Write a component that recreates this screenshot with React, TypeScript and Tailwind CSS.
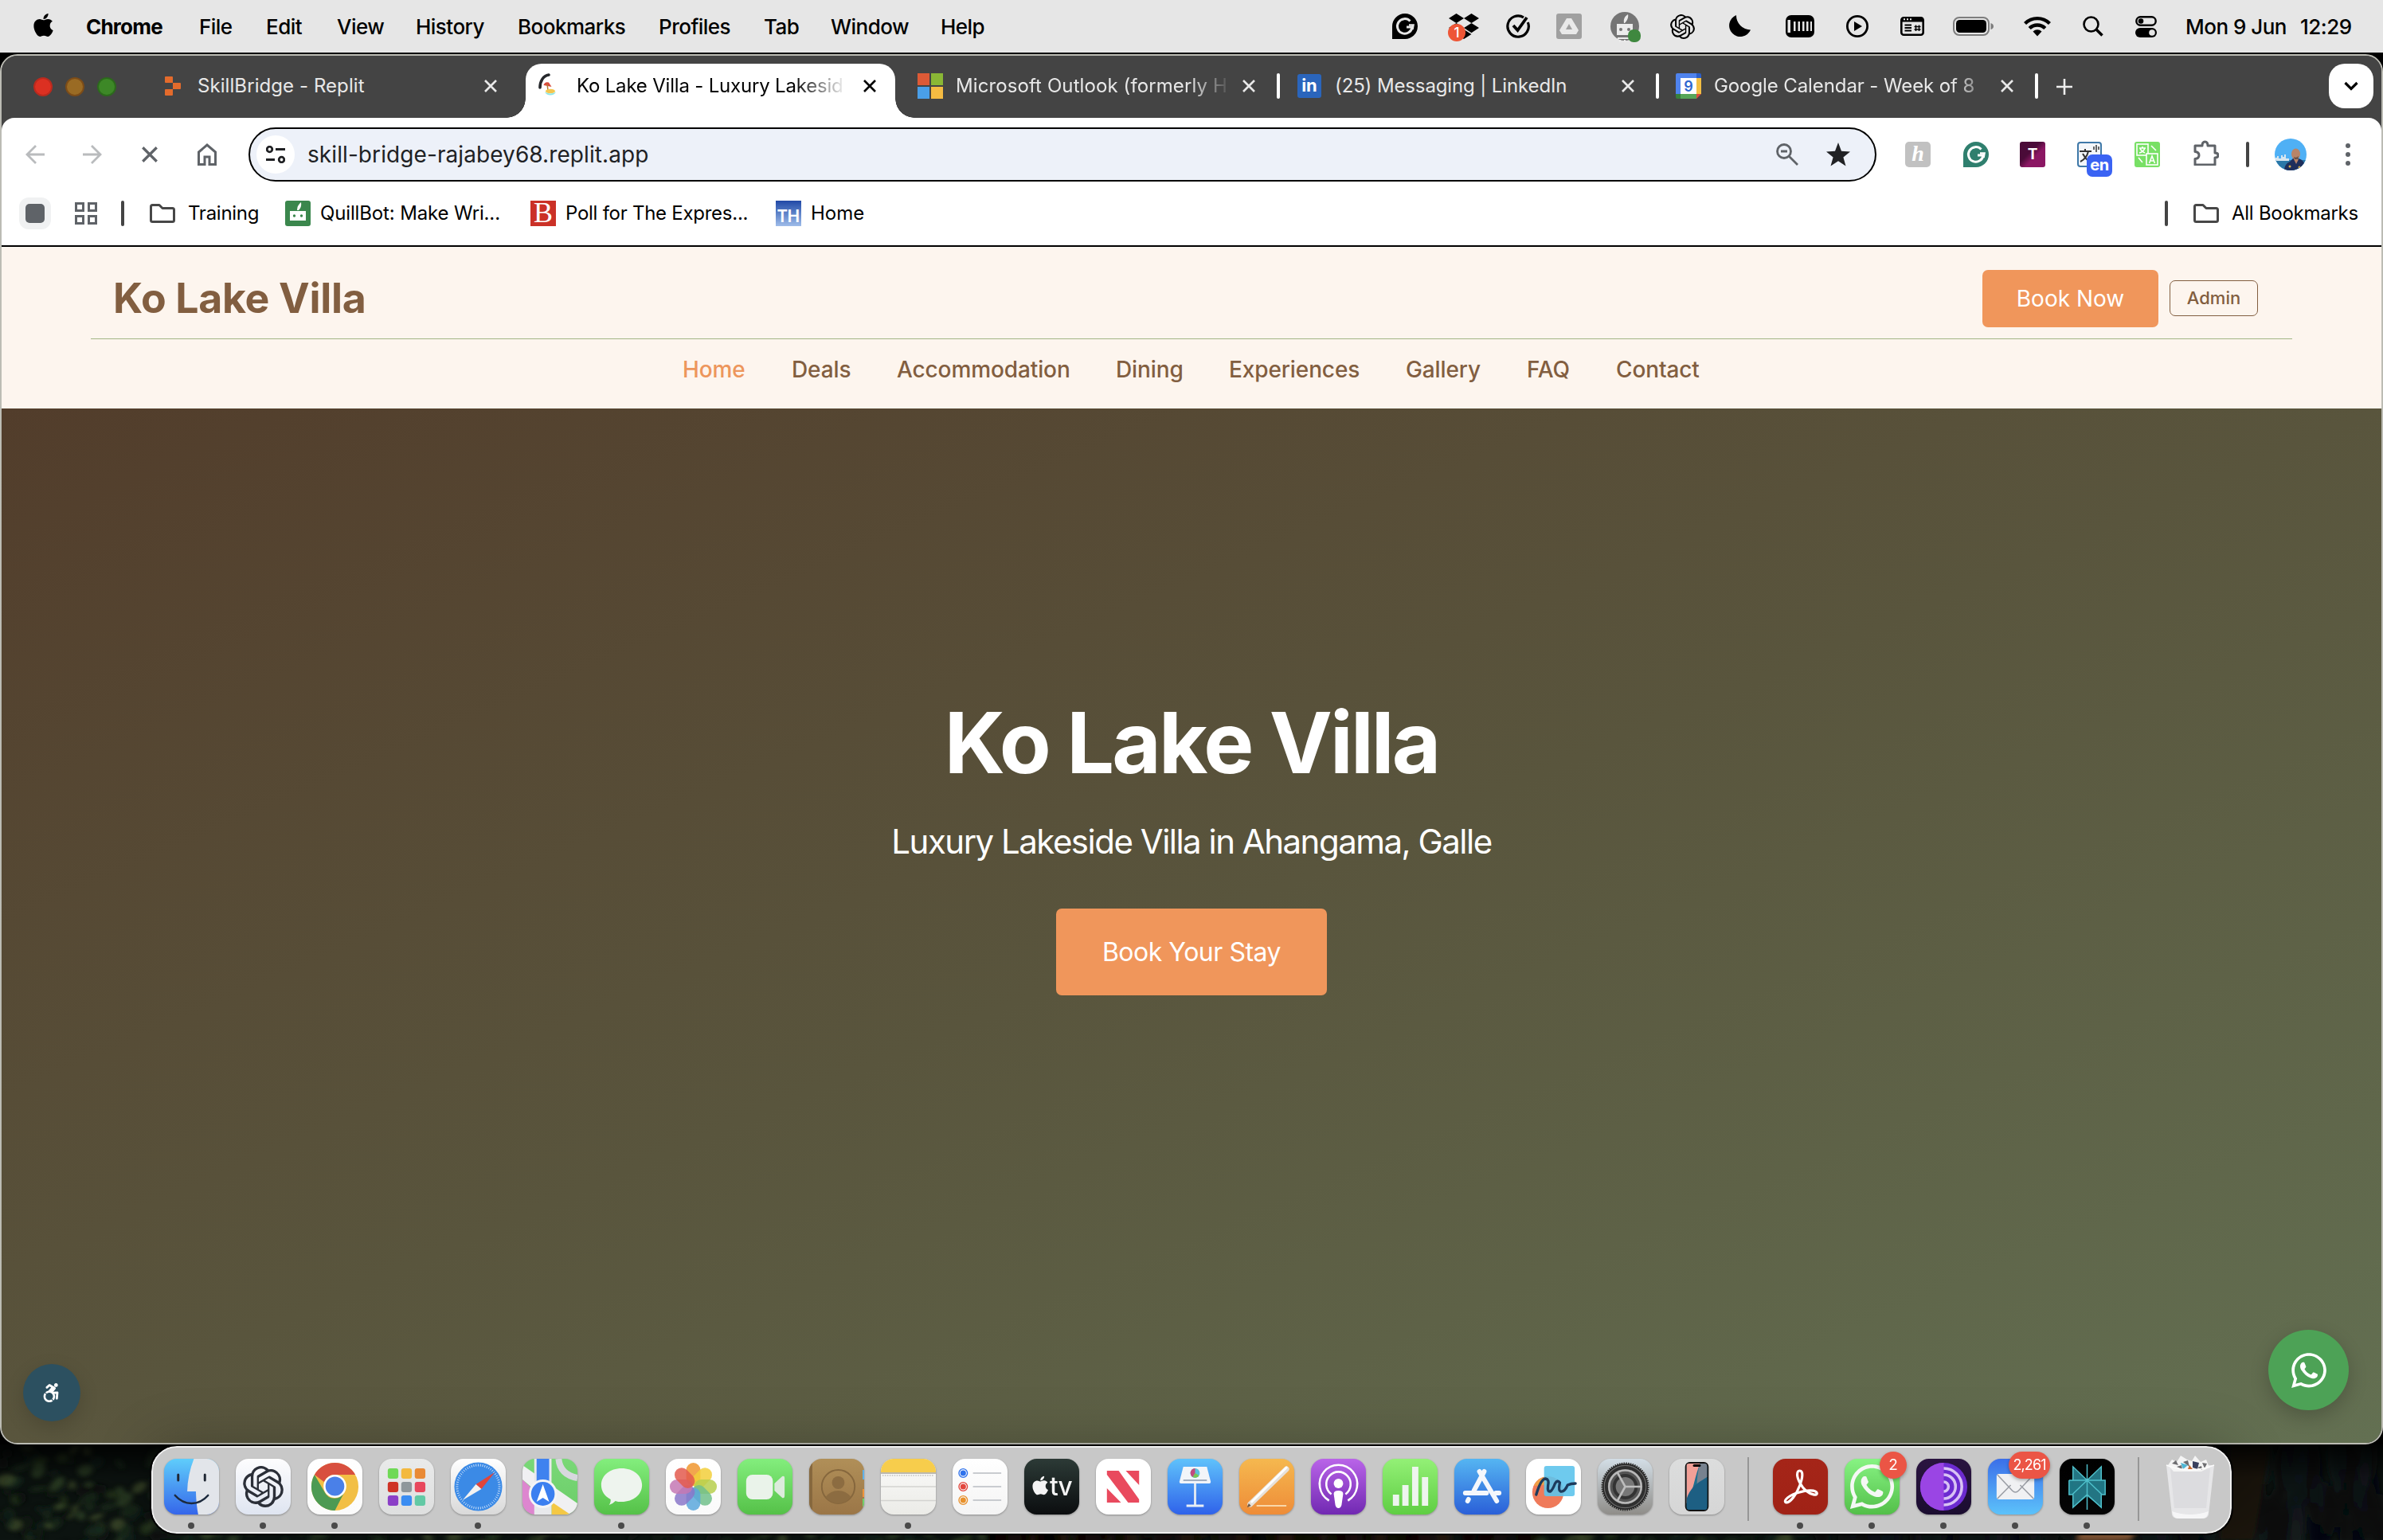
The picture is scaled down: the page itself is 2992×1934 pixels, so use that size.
import React from "react";
import { FaApple, FaDropbox, FaWhatsapp, FaAccessibleIcon } from "react-icons/fa";
import { SiOpenai } from "react-icons/si";

/* ---------- shared glyphs ---------- */

function GrammarlyG({ body, ink }: { body: string; ink: string }) {
  return (
    <svg className="size-8" viewBox="0 0 32 32" fill="none">
      <path d="M0 32V16a16 16 0 1 1 16 16Z" fill={body} />
      <path d="M22.500 9.500A9.300 9.300 0 1 0 25 17h-7" stroke={ink} strokeWidth="3" />
      <path d="M21 14.500h5.500l-1 5.500" stroke={ink} strokeWidth="2.500" />
    </svg>
  );
}

function CloseX({ className }: { className: string }) {
  return (
    <svg className={className} viewBox="0 0 16 16" fill="none" stroke="currentColor" strokeWidth="2.600">
      <path d="M1 1l14 14M15 1L1 15" />
    </svg>
  );
}

function Folder() {
  return (
    <svg className="w-8 h-6" viewBox="0 0 32 24" fill="none" stroke="#474747" strokeWidth="3" strokeLinejoin="round">
      <path d="M1.500 3.500q0-2 2-2H12l4 4h12.500q2 0 2 2v13q0 2-2 2h-25q-2 0-2-2z" />
    </svg>
  );
}

/* ---------- menu bar ---------- */

const menus: [string, string][] = [
  ["Chrome", "w-[142px] font-bold tracking-[-0.030em]"],
  ["File", "w-[84px]"],
  ["Edit", "w-[89px]"],
  ["View", "w-[99px]"],
  ["History", "w-[128px]"],
  ["Bookmarks", "w-[177px]"],
  ["Profiles", "w-[132px]"],
  ["Tab", "w-[84px]"],
  ["Window", "w-[138px]"],
  ["Help", "w-[80px]"],
];

function MenuBar() {
  return (
    <div className="h-[66px] bg-[#e6e6e6] flex items-center text-[26px] text-black tracking-[-0.02em] whitespace-nowrap font-[450]">
      <div className="w-[108px] pl-[38px] pb-1">
        <FaApple className="size-[33px]" />
      </div>
      {menus.map(([m, c]) => (
        <div key={m} className={c}>{m}</div>
      ))}
      <div className="ml-auto flex items-center w-[1244px] h-full">
        <div className="w-[71px]"><GrammarlyG body="#000" ink="#e6e6e6" /></div>
        <div className="w-[72px] relative">
          <FaDropbox className="size-[38px]" />
          <div className="absolute -left-px top-[16px] size-[22px] rounded-full bg-[#ee5636] text-white text-[17px] leading-[22px] text-center tracking-normal">1</div>
        </div>
        <div className="w-[63px]">
          <svg className="size-[30px]" viewBox="0 0 30 30" fill="none" stroke="#000" strokeWidth="3.200">
            <path d="M22 3.800A13.200 13.200 0 1 0 27.300 10" />
            <path d="M9 14l5.500 6L26 4" strokeWidth="3.800" />
          </svg>
        </div>
        <div className="w-[68px]">
          <svg className="size-8" viewBox="0 0 32 32">
            <rect width="32" height="32" rx="3" fill="#a0a0a0" />
            <path d="M13 6h6l9 15-3 5H7l-3-5z" fill="#e9e9e9" />
            <path d="M16 13l4 7h-8z" fill="#a0a0a0" />
          </svg>
        </div>
        <div className="w-[75px]">
          <svg className="w-[38px] h-[38px] mt-0.5" viewBox="0 0 38 38">
            <circle cx="18" cy="18" r="18" fill="#757575" />
            <path d="M8 15h20v14H8zM17 14c-1-6 2-9 5-11 1 4-1 8-4 11z" fill="#ececec" />
            <circle cx="13" cy="22" r="2" fill="#757575" />
            <circle cx="23" cy="22" r="2" fill="#757575" />
            <path d="M9 32h14v2H9zM11 35h2v3h-2zM17 35h2v3h-2z" fill="#ececec" />
            <rect x="22" y="22" width="16" height="16" rx="7" fill="#3f883f" />
          </svg>
        </div>
        <div className="w-[74px]"><SiOpenai className="size-[31px]" /></div>
        <div className="w-[71px]">
          <svg className="size-[28px]" viewBox="0 0 28 28">
            <path d="M9 0a18 18 0 0 0 18 18.500A14 14 0 1 1 9 0z" fill="#000" />
          </svg>
        </div>
        <div className="w-[76px]">
          <svg className="w-9 h-7" viewBox="0 0 36 28">
            <rect width="36" height="28" rx="7" fill="#000" />
            <path d="M2.500 6h3.500v16H2.500zM10 8h2.500v12H10zM15.500 8h2.500v12h-2.500zM21 8h2.500v12H21zM26 8h2.500v12H26zM31 8h2v12h-2z" fill="#e6e6e6" />
          </svg>
        </div>
        <div className="w-[68px]">
          <svg className="size-[28px]" viewBox="0 0 28 28">
            <circle cx="14" cy="14" r="12.600" fill="none" stroke="#000" strokeWidth="2.800" />
            <path d="M10 8l10 6-10 6z" />
          </svg>
        </div>
        <div className="w-[66px]">
          <svg className="w-[30px] h-6" viewBox="0 0 30 24" fill="none" stroke="#000">
            <rect x="1.300" y="1.300" width="27.400" height="21.400" rx="3" strokeWidth="2.600" />
            <path d="M1 4h28" strokeWidth="5" />
            <path d="M4 3.200h2M8 3.200h2M12 3.200h2" stroke="#e6e6e6" strokeWidth="2" />
            <path d="M5.500 10.500h8.500M5.500 14h8.500M5.500 17.500h8.500" strokeWidth="2" />
            <path d="M19.500 10.500v7.500M23.500 10.500v7.500M17.500 12.500h8M17.500 16h8" strokeWidth="1.500" />
          </svg>
        </div>
        <div className="w-[89px]">
          <svg className="w-[52px] h-6" viewBox="0 0 52 24">
            <rect x="1" y="1" width="44" height="22" rx="7" fill="none" stroke="#7d7d7d" strokeWidth="2" />
            <rect x="4" y="4" width="38" height="16" rx="4.500" />
            <path d="M47.500 8q3.500 1 3.500 4t-3.500 4z" fill="#7d7d7d" />
          </svg>
        </div>
        <div className="w-[74px]">
          <svg className="w-[34px] h-[26px]" viewBox="0 0 34 26" fill="none" stroke="#000" strokeWidth="4.400">
            <path d="M1.500 9.500a22 22 0 0 1 31 0" />
            <path d="M7.200 15.500a14 14 0 0 1 19.600 0" />
            <path d="M17 25.500l-5.500-6a8 8 0 0 1 11 0z" fill="#000" stroke="none" />
          </svg>
        </div>
        <div className="w-[66px]">
          <svg className="size-[26px]" viewBox="0 0 26 26" fill="none" stroke="#000">
            <circle cx="10.500" cy="10.500" r="9" strokeWidth="2.600" />
            <path d="M17 17l7.500 7.500" strokeWidth="3.600" />
          </svg>
        </div>
        <div className="w-[64px]">
          <svg className="w-[27px] h-[27px]" viewBox="0 0 27 27">
            <rect x="1.300" y="1.300" width="24.400" height="10.400" rx="5.200" fill="none" stroke="#000" strokeWidth="2.400" />
            <circle cx="7" cy="6.500" r="3.300" />
            <rect y="15" width="27" height="12" rx="6" />
            <circle cx="21" cy="21" r="3.800" fill="#e6e6e6" />
          </svg>
        </div>
        <div className="w-[144px] -ml-px">Mon 9 Jun</div>
        <div>12:29</div>
      </div>
    </div>
  );
}

/* ---------- tab strip ---------- */

function ReplitMark() {
  return (
    <svg className="w-5 h-6 ml-0.5" viewBox="0 0 20 24" fill="#e46b2c">
      <path d="M0 1q0-1 1-1h8q1 0 1 1v7H1Q0 8 0 7zM10 8h9q1 0 1 1v6q0 1-1 1h-9zM1 16h9v7q0 1-1 1H1q-1 0-1-1v-6q0-1 1-1z" />
    </svg>
  );
}

function VillaMark() {
  return (
    <svg className="w-8 h-8" viewBox="0 0 32 32" fill="none">
      <path d="M2 18C2 10 6 3 13 2" stroke="#26282c" strokeWidth="3.600" strokeLinecap="round" />
      <path d="M6.500 15q1.500-5 6.500-3.500l3.500 5.500z" fill="#d94a3c" />
      <path d="M11 13.500l1 8" stroke="#b37a35" strokeWidth="1.500" />
      <ellipse cx="15" cy="22.500" rx="6" ry="2.800" fill="#f3c64f" />
      <path d="M8 23.500q7 4 14 0-2 4-7 4t-7-4z" fill="#8fe6e6" />
    </svg>
  );
}

function MsMark() {
  return (
    <div className="size-8 grid grid-cols-2 gap-[2px]">
      <div className="bg-[#dd5a36]" />
      <div className="bg-[#8ab735]" />
      <div className="bg-[#4a9fe8]" />
      <div className="bg-[#f5bb42]" />
    </div>
  );
}

function LinkedInMark() {
  return (
    <div className="size-[30px] rounded-[3px] bg-[#2a65bc] text-white text-[22px] leading-[29px] font-bold text-center">in</div>
  );
}

function CalendarMark() {
  return (
    <svg className="size-8" viewBox="0 0 32 32">
      <path d="M2 0h24v6H6v20H0V2q0-2 2-2z" fill="#4f83ee" />
      <path d="M26 0h4q2 0 2 2v4h-6z" fill="#2c5fc9" />
      <path d="M26 6h6v20h-6z" fill="#f2be43" />
      <path d="M6 26h20v6H6z" fill="#56a558" />
      <path d="M0 26h6v6H2q-2 0-2-2z" fill="#37803c" />
      <path d="M26 26h6l-6 6z" fill="#dc4b3c" />
      <path d="M6 6h20v20H6z" fill="#fff" />
      <text x="16" y="22.500" fontSize="18" fontWeight="600" fontFamily="Inter" textAnchor="middle" fill="#2f66d0">9</text>
    </svg>
  );
}

type TabProps = { icon: React.ReactNode; title: string; active?: boolean; sep?: boolean; fade?: string; track: string };

function Tab({ icon, title, active, sep, fade = "", track }: TabProps) {
  return (
    <div className={"relative w-[476px] h-full shrink-0 " + (active ? "text-black" : "text-[#e8e8e8]")}>
      {active && (
        <>
          <div className="absolute -left-4 top-[10px] w-[464px] bottom-0 bg-white rounded-t-[20px]" />
          <div className="absolute -left-10 bottom-0 size-6 bg-[radial-gradient(circle_at_0_0,transparent_23.500px,#fff_24px)]" />
          <div className="absolute left-[448px] bottom-0 size-6 bg-[radial-gradient(circle_at_100%_0,transparent_23.500px,#fff_24px)]" />
        </>
      )}
      <div className="relative flex items-center h-[76px]">
        <div className="w-12 shrink-0 flex">
          <div className="w-8 flex justify-center">{icon}</div>
        </div>
        <div className={"w-[340px] shrink-0 whitespace-nowrap text-[24px] " + track + " " + fade}>{title}</div>
        <CloseX className="size-4 ml-5 shrink-0" />
        {sep && <div className="ml-[27px] w-1 h-8 rounded-sm bg-white shrink-0" />}
      </div>
    </div>
  );
}

function TabStrip() {
  return (
    <div className="h-[78px] bg-[#444] flex items-start">
      <div className="w-[198px] shrink-0 h-[78px] pl-10 flex items-center gap-4">
        <div className="size-6 rounded-full bg-[#dc3022] border-2 border-[#b92a1e]" />
        <div className="size-6 rounded-full bg-[#9a6b24] border-2 border-[#7c4c18]" />
        <div className="size-6 rounded-full bg-[#3d8827] border-2 border-[#2c6a1c]" />
      </div>
      <Tab icon={<ReplitMark />} title="SkillBridge - Replit" track="tracking-[0.003em]" />
      <Tab icon={<VillaMark />} title="Ko Lake Villa - Luxury Lakesid" active fade="[mask-image:linear-gradient(90deg,#000_80%,transparent_100%)]" track="tracking-[-0.008em]" />
      <Tab icon={<MsMark />} title="Microsoft Outlook (formerly H" sep fade="[mask-image:linear-gradient(90deg,#000_86%,transparent_102%)]" track="tracking-[0.004em]" />
      <Tab icon={<LinkedInMark />} title="(25) Messaging | LinkedIn" sep track="tracking-[-0.005em]" />
      <Tab icon={<CalendarMark />} title="Google Calendar - Week of 8" sep fade="[mask-image:linear-gradient(90deg,#000_88%,transparent_104%)]" track="tracking-[-0.004em]" />
      <svg className="mt-7 ml-px size-[22px] shrink-0" viewBox="0 0 22 22" stroke="#eee" strokeWidth="2.600">
        <path d="M11 1v20M1 11h20" />
      </svg>
      <div className="ml-auto mr-[10px] mt-[10px] size-14 rounded-[20px] bg-white flex items-center justify-center">
        <svg className="w-[18px] h-3" viewBox="0 0 18 12" fill="none" stroke="#000" strokeWidth="3.200">
          <path d="M1.500 2L9 9.500 16.500 2" />
        </svg>
      </div>
    </div>
  );
}

/* ---------- toolbar ---------- */

function Toolbar() {
  return (
    <div className="h-[92px] flex items-center text-[#5f6368]">
      <svg className="w-6 h-6 ml-[30px] shrink-0" viewBox="0 0 24 24" fill="none" stroke="#b9bbbd" strokeWidth="2.800">
        <path d="M24 12H2M13 1L2 12l11 11" />
      </svg>
      <svg className="w-6 h-6 ml-12 shrink-0" viewBox="0 0 24 24" fill="none" stroke="#b9bbbd" strokeWidth="2.800">
        <path d="M0 12h22M11 1l11 11-11 11" />
      </svg>
      <CloseX className="size-5 ml-[50px] shrink-0" />
      <svg className="w-6 h-[28px] ml-[50px] shrink-0" viewBox="0 0 24 28" fill="none" stroke="currentColor" strokeWidth="3">
        <path d="M1.500 26.500V11L12 2l10.500 9v15.500H15V17H9v9.500z" />
      </svg>
      <div className="ml-10 w-[2044px] shrink-0 h-[68px] rounded-full border-2 border-black bg-[#edf1f9] flex items-center">
        <div className="ml-2 size-12 rounded-full bg-white flex items-center justify-center">
          <svg className="w-6 h-[22px]" viewBox="0 0 24 22" fill="none" stroke="#202124" strokeWidth="2.800">
            <circle cx="4.500" cy="4.500" r="3.300" />
            <path d="M12 4.500h12M0 17.500h11" />
            <circle cx="19.500" cy="17.500" r="3.300" />
          </svg>
        </div>
        <div className="ml-4 text-[28px] text-[#202124] tracking-[0.003em]">skill-bridge-rajabey68.replit.app</div>
        <svg className="ml-auto w-7 h-7" viewBox="0 0 28 28" fill="none" stroke="currentColor" strokeWidth="2.800">
          <circle cx="10" cy="10" r="8.500" />
          <path d="M16 16l11 11M6 10h8" />
        </svg>
        <svg className="ml-[35px] mr-[31px] w-[30px] h-[30px]" viewBox="0 0 30 30" fill="#202124">
          <path d="M15 0l4 10.800 11 .6-8.600 7L24.500 29.500 15 23.200 5.500 29.500 8.600 18.400 0 11.400l11-.6z" />
        </svg>
      </div>
      <div className="ml-9 flex items-center shrink-0">
        <div className="w-[73px]">
          <div className="size-8 rounded-[5px] bg-[#c1c1c1] text-white text-[28px] leading-[29px] text-center italic font-semibold font-['Liberation_Serif']">h</div>
        </div>
        <div className="w-[71px]"><GrammarlyG body="#2f7f6e" ink="#fff" /></div>
        <div className="w-[72px]">
          <div className="size-8 rounded-[3px] bg-linear-to-br from-[#4a0b38] from-40% to-[#8b1763] to-60% text-white text-[19px] leading-8 font-bold text-center">T</div>
        </div>
        <div className="w-[72px] relative">
          <svg className="size-8" viewBox="0 0 32 32" fill="none" stroke="#333" strokeWidth="2">
            <rect x="1" y="1" width="29" height="30" rx="3" fill="#f3f6fa" stroke="#3e78a8" />
            <path d="M3 12h15M10 9v3M14 12q-2 9-10 13M7 15q3 6 8 10" />
            <path d="M21 6v4M24 4v9M27 6v4" strokeWidth="1.500" />
          </svg>
          <div className="absolute left-3 top-4 w-8 h-7 rounded-[7px] bg-[#3a63f3] text-white text-[20px] leading-[27px] font-bold text-center tracking-tight">en</div>
        </div>
        <div className="w-[74px]">
          <svg className="size-8" viewBox="0 0 32 32" fill="none" stroke="#fff" strokeWidth="1.600">
            <rect width="32" height="32" rx="3" fill="#78e065" stroke="none" />
            <rect x="3" y="3" width="14" height="14" />
            <rect x="15" y="15" width="14" height="14" fill="#78e065" />
            <path d="M6 8h8M10 6v2M13 8q-2 5-7 6M7 9q3 4 6 5M18.500 27l3.500-9 3.500 9M20 24h4M21 5l6 6M5 20l5 6" />
          </svg>
        </div>
        <div className="w-[66px]">
          <svg className="size-8 -mt-1" viewBox="0 0 32 32" fill="none" stroke="currentColor" strokeWidth="3">
            <path d="M2 7h9q0-5 3.500-5T18 7h9v9q4 0 4 3t-4 3v9H2v-7.500q5-.5 5-4.500t-5-4.500z" strokeLinejoin="round" />
          </svg>
        </div>
        <div className="w-9"><div className="w-1 h-8 rounded-sm bg-[#444]" /></div>
        <div className="w-[89px]">
          <svg className="size-10 rounded-full" viewBox="0 0 40 40">
            <rect width="40" height="40" fill="#4fb0f5" />
            <rect y="27" width="40" height="13" fill="#2a78a8" />
            <path d="M0 28v-4h3v-2h2v3h3v-4h2v2h2v-3h2v5h4v3z" fill="#d8e6ef" />
            <path d="M12 40q0-8 7-11l4-4h6q9 1 10 15z" fill="#1e2f5c" />
            <ellipse cx="26.500" cy="19.500" rx="5.500" ry="7" fill="#b98468" />
            <path d="M24 26l3 6 3-6z" fill="#b98468" />
            <path d="M24 23q3 2 6-1l-1 4h-4z" fill="#6b5146" />
            <circle cx="19" cy="35" r="1.500" fill="#d9b04a" />
            <circle cx="31" cy="36" r="1.500" fill="#d9b04a" />
          </svg>
        </div>
        <div className="flex flex-col gap-[5px]">
          <div className="w-1.5 h-1.5 rounded-full bg-[#5f6368]" />
          <div className="w-1.5 h-1.5 rounded-full bg-[#5f6368]" />
          <div className="w-1.5 h-1.5 rounded-full bg-[#5f6368]" />
        </div>
      </div>
    </div>
  );
}

function BookmarksBar() {
  return (
    <div className="h-[68px] pb-3 flex items-center text-[24px] text-black whitespace-nowrap tracking-[-0.011em]">
      <div className="ml-[22px] size-10 rounded-xl bg-[#f0f1f2] flex items-center justify-center">
        <div className="size-6 rounded-[5px] bg-[#5f6368]" />
      </div>
      <svg className="ml-[30px] size-7" viewBox="0 0 28 28" fill="none" stroke="#5f6368" strokeWidth="3">
        <path d="M1.500 1.500h9v9h-9zM17.500 1.500h9v9h-9zM1.500 17.500h9v9h-9zM17.500 17.500h9v9h-9z" />
      </svg>
      <div className="ml-[30px] w-1 h-8 rounded-sm bg-[#444]" />
      <div className="ml-8 w-[48px]"><Folder /></div>
      <div className="w-[122px]">Training</div>
      <div className="w-11">
        <svg className="size-8" viewBox="0 0 32 32">
          <rect width="32" height="32" rx="3" fill="#3b874d" />
          <path d="M6 13h20v12H6zM15 12q0-6 5-10 1 6-3 10z" fill="#fff" />
          <circle cx="11.500" cy="19" r="1.700" fill="#3b874d" />
          <circle cx="20.500" cy="19" r="1.700" fill="#3b874d" />
        </svg>
      </div>
      <div className="w-[264px] tracking-[-0.006em]">QuillBot: Make Wri...</div>
      <div className="w-11">
        <div className="size-8 bg-[#cb3127] text-white text-[36px] leading-[31px] text-center font-['Liberation_Serif'] tracking-normal">B</div>
      </div>
      <div className="w-[264px]">Poll for The Expres...</div>
      <div className="w-11">
        <div className="size-8 bg-linear-to-b from-[#2148a6] to-[#9fbce9] text-white text-[22px] leading-9 tracking-[-0.03em] font-semibold text-center font-['Noto_Sans']">TH</div>
      </div>
      <div className="tracking-normal">Home</div>
      <div className="ml-auto w-[36px]"><div className="w-1 h-8 rounded-sm bg-[#444]" /></div>
      <div className="w-12"><Folder /></div>
      <div className="w-[188px]">All Bookmarks</div>
    </div>
  );
}

/* ---------- web page ---------- */

const nav: [string, string][] = [
  ["Home", "w-[137px] text-[#ed965c]"],
  ["Deals", "w-[132px]"],
  ["Accommodation", "w-[275px]"],
  ["Dining", "w-[142px]"],
  ["Experiences", "w-[222px]"],
  ["Gallery", "w-[152px]"],
  ["FAQ", "w-[112px]"],
  ["Contact", "w-[108px]"],
];

function VillaPage() {
  return (
    <div className="flex-1 flex flex-col relative">
      <header className="h-[203px] bg-[#fdf5ee] text-[#825e40]">
        <div className="ml-[112px] w-[2764px] h-[116px] border-b border-[#a3b585] flex items-center pt-[14px] pl-7 pr-[43px]">
          <div className="text-[51.800px] font-bold tracking-[-0.006em] whitespace-nowrap mt-px">Ko Lake Villa</div>
          <div className="ml-auto w-[221px] h-[72px] shrink-0 rounded-[7px] bg-[#f0965b] text-white text-[28px] flex items-center justify-center">Book Now</div>
          <div className="ml-[14px] w-[111px] h-[45px] shrink-0 rounded-[7px] border border-[#825e40] text-[22px] font-[450] flex items-center justify-center">Admin</div>
        </div>
        <nav className="flex ml-[855px] h-[75px] items-center text-[28px] font-medium whitespace-nowrap tracking-[-0.004em]">
          {nav.map(([n, c]) => (
            <div key={n} className={c}>{n}</div>
          ))}
        </nav>
      </header>
      <main className="flex-1 bg-linear-to-br from-[#523d2b] via-[#59553d] to-[#637052] flex flex-col items-center text-white">
        <h1 className="mt-[353px] h-[134px] leading-[134px] text-[106px] font-bold tracking-[-0.027em]">Ko Lake Villa</h1>
        <p className="mt-[25px] h-[64px] leading-[64px] text-[42px] tracking-[-0.036em]">Luxury Lakeside Villa in Ahangama, Galle</p>
        <div className="mt-[52px] w-[340px] h-[109px] rounded-[7px] bg-[#f0965b] text-[32px] tracking-[-0.015em] flex items-center justify-center">Book Your Stay</div>
      </main>
      <div className="absolute left-[27px] bottom-[27px] size-[72px] rounded-full bg-[#2c5060] shadow-[0_8px_24px_rgba(0,0,0,0.15)] flex items-center justify-center text-white">
        <FaAccessibleIcon className="size-[24px] -ml-0.5" />
      </div>
      <div className="absolute right-[41px] bottom-[41px] size-[101px] rounded-full bg-[#4da256] shadow-[0_8px_24px_rgba(0,0,0,0.2)] flex items-center justify-center text-white">
        <FaWhatsapp className="size-[50px]" />
      </div>
    </div>
  );
}

/* ---------- dock ---------- */

function Tile({ id, from, to, children }: { id: string; from: string; to: string; children?: React.ReactNode }) {
  return (
    <svg className="w-[69px] h-[70px] overflow-visible drop-shadow-[0_1px_1px_rgba(0,0,0,0.3)]" viewBox="0 0 70 70" fill="none" preserveAspectRatio="none">
      <defs>
        <linearGradient id={"g-" + id} x1="0" y1="0" x2="0" y2="1">
          <stop offset="0" stopColor={from} />
          <stop offset="1" stopColor={to} />
        </linearGradient>
        <clipPath id={"c-" + id}><rect width="70" height="70" rx="16" /></clipPath>
      </defs>
      <rect width="70" height="70" rx="16" fill={"url(#g-" + id + ")"} />
      <g clipPath={"url(#c-" + id + ")"}>{children}</g>
    </svg>
  );
}

const ticks = Array.from({ length: 60 }, (_, i) => (i * Math.PI) / 30);

const Finder = () => (
  <Tile id="finder" from="#5fcdfb" to="#3566ea">
    <path d="M38 0h32v70H43.500q-2.500-12-3-29H29.500Q30 20 38 0z" fill="#e2e5ea" />
    <path d="M18 20v7M52 20v7" stroke="#202733" strokeWidth="3" strokeLinecap="round" />
    <path d="M14 46q9 10 21 10t21-10" stroke="#1c2a3d" strokeWidth="2.600" strokeLinecap="round" />
  </Tile>
);

const ChatGpt = () => (
  <Tile id="gpt" from="#fdfdfe" to="#dfe5f1">
    <g transform="translate(9 9)"><SiOpenai size={52} color="#2b2f38" /></g>
  </Tile>
);

const Chrome = () => (
  <Tile id="chrome" from="#fff" to="#fbfbfb">
    <circle cx="35" cy="35" r="30" fill="#f2bf45" />
    <path d="M9 20A30 30 0 0 1 61 20H35A15 15 0 0 0 21 29z" fill="#d84f3f" />
    <path d="M9 20A30 30 0 0 0 35 65L47 42A14 14 0 0 1 22 42z" fill="#4c9a53" />
    <circle cx="35" cy="34.500" r="14.500" fill="#fff" />
    <circle cx="35" cy="34.500" r="12" fill="#4a80e8" />
  </Tile>
);

const launchColors = ["#6fd956", "#f3b93f", "#e98a35", "#cf3326", "#8f979b", "#e8475c", "#8b3fc7", "#3a8df2", "#62c9a5"];
const Launchpad = () => (
  <Tile id="launch" from="#e9eaea" to="#dedfdf">
    {launchColors.map((c, i) => (
      <rect key={c} x={11 + (i % 3) * 17.2} y={12 + Math.floor(i / 3) * 17} width="13.500" height="13" rx="3" fill={c} />
    ))}
  </Tile>
);

const Safari = () => (
  <Tile id="safari" from="#ffffff" to="#d9d9d9">
    <circle cx="35" cy="35" r="30.500" fill="#3b8ae6" />
    {ticks.map((a) => (
      <path key={a} d={`M${35 + 25.5 * Math.cos(a)} ${35 + 25.5 * Math.sin(a)}L${35 + 28.5 * Math.cos(a)} ${35 + 28.5 * Math.sin(a)}`} stroke="#d5e6fa" strokeWidth="0.900" />
    ))}
    <path d="M56 17L39 38l-7-6z" fill="#e0443a" />
    <path d="M15 52l17-20 7 6z" fill="#f2f2f2" />
  </Tile>
);

const Maps = () => (
  <Tile id="maps" from="#79d877" to="#6ccd69">
    <path d="M0 26l32 30v14H0z" fill="#dd86cf" />
    <path d="M0 8l70 48v14H52L0 26z" fill="#f0f0f2" />
    <path d="M37 54l24 16H37z" fill="#f4c845" />
    <path d="M15 0h22v70H15z" fill="#e8e9ec" />
    <path d="M18 0h16v40H18z" fill="#3f82ef" />
    <path d="M46 0q2 20 24 24" stroke="#d7d8de" strokeWidth="8" />
    <circle cx="26" cy="44" r="18" fill="#f4f4f6" />
    <circle cx="26" cy="44" r="15" fill="#3b7ff0" />
    <path d="M26 32l8 22-8-5-8 5z" fill="#fff" />
  </Tile>
);

const Messages = () => (
  <Tile id="msg" from="#83ee7d" to="#55c148">
    <path d="M35 12c15 0 26 9 26 21S50 54 35 54c-3 0-6 0-8-1-2 2-5 4-8 5 2-3 2-5 2-7C13 47 9 40 9 33c0-12 11-21 26-21z" fill="#eef4ee" />
  </Tile>
);

const petals = ["#f0962f", "#f2cf3b", "#b7cf4e", "#71bf8b", "#5aa7dc", "#8a77c9", "#c478b4", "#e35b4e"];
const Photos = () => (
  <Tile id="photos" from="#fff" to="#fafafa">
    {petals.map((c, i) => (
      <rect key={c} x="26" y="5" width="18" height="29" rx="9" fill={c} opacity="0.850" transform={`rotate(${i * 45} 35 35)`} />
    ))}
  </Tile>
);

const FaceTime = () => (
  <Tile id="ft" from="#83ee7d" to="#55c148">
    <rect x="11" y="20" width="34" height="31" rx="8" fill="#eaf3ea" />
    <path d="M47 31l10-9q3-1 3 2v22q0 4-3 3l-10-9z" fill="#dcebdc" />
  </Tile>
);

const Contacts = () => (
  <Tile id="contacts" from="#b08f58" to="#9b7647">
    <path d="M0 0h4v70H0z" fill="#86683e" />
    <circle cx="37" cy="35" r="21" stroke="#86673d" strokeWidth="2" />
    <circle cx="37" cy="30" r="8" fill="#8c6c41" />
    <path d="M21 48q6-8 16-8t16 8q-6 8-16 8t-16-8z" fill="#8c6c41" />
    <path d="M68 14h2v12h-2z" fill="#5fb1ea" />
    <path d="M68 38h2v10h-2z" fill="#f0943a" />
    <path d="M68 50h2v10h-2z" fill="#6fd56b" />
  </Tile>
);

const Notes = () => (
  <Tile id="notes" from="#fbfbfa" to="#ebebe7">
    <path d="M0 0h70v17H0z" fill="#f7cd4c" />
    <path d="M0 18h70" stroke="#a8a394" strokeWidth="1.500" />
    <path d="M2 21h66" stroke="#c0c0bb" strokeWidth="1.500" strokeDasharray="1.500 1.500" />
    <path d="M0 35h70M0 52.500h70" stroke="#d3d3d0" strokeWidth="1.500" />
  </Tile>
);

const Reminders = () => (
  <Tile id="rem" from="#fff" to="#f4f4f4">
    {["#2f72ec", "#e2463d", "#e8912c"].map((c, i) => (
      <g key={c}>
        <circle cx="13.500" cy={18 + i * 17} r="5.400" stroke={c} strokeWidth="1.400" />
        <circle cx="13.500" cy={18 + i * 17} r="3.600" fill={c} />
        <path d={`M26 ${18 + i * 17}h36`} stroke="#b8bcc2" strokeWidth="1.600" />
      </g>
    ))}
  </Tile>
);

const AppleTv = () => (
  <Tile id="tv" from="#2c3a36" to="#0b0d0f">
    <g transform="translate(7 20)"><FaApple size={27} color="#f4f4f4" /></g>
    <text x="46.500" y="46" fontSize="32" fontWeight="500" fontFamily="Inter" textAnchor="middle" fill="#f4f4f4" letterSpacing="-1">tv</text>
  </Tile>
);

const News = () => (
  <Tile id="news" from="#fff" to="#fff">
    <path d="M14 15h15l26 36v4H41L14 20z" fill="#e94a5e" />
    <path d="M38 15h17v18zM14 37v18h18z" fill="#e94a5e" />
  </Tile>
);

const Keynote = () => (
  <Tile id="key" from="#5fc2fb" to="#2f62ea">
    <path d="M20 10h30l5 19q0 2-2 2H17q-2 0-2-2z" fill="#f2f5f9" />
    <path d="M20 27h30" stroke="#8796ad" strokeWidth="1.500" />
    <path d="M33.500 31h3v28h-3z" fill="#dfe7f2" />
    <path d="M24 59h22" stroke="#e8eef6" strokeWidth="3" />
    <circle cx="35" cy="18" r="6" fill="#5ac1dc" />
    <path d="M35 18v-6a6 6 0 0 0-6 6 6 6 0 0 0 3 5z" fill="#c24b7e" />
    <path d="M35 18l-3 5a6 6 0 0 0 8-2z" fill="#7cc653" />
  </Tile>
);

const Pages = () => (
  <Tile id="pages" from="#f5b84f" to="#ee8c38">
    <path d="M14 57L60 13" stroke="#e6e1da" strokeWidth="7" strokeLinecap="round" />
    <path d="M16 54L60 11" stroke="#fff" strokeWidth="3" strokeLinecap="round" />
    <path d="M10 61l2-5 3 3z" fill="#6d5a48" />
    <path d="M22 59h38" stroke="#f9d7a8" strokeWidth="1.800" />
  </Tile>
);

const Podcasts = () => (
  <Tile id="pod" from="#b964e8" to="#7129b2">
    <path d="M23 52.500A24 24 0 1 1 47 52.500" stroke="#fff" strokeWidth="2.600" />
    <path d="M26 44.500A15.500 15.500 0 1 1 44 44.500" stroke="#fff" strokeWidth="2.600" />
    <circle cx="35" cy="31" r="6" fill="#fff" />
    <path d="M29 44q0-4 6-4t6 4l-2 14q-1 4-4 4t-4-4z" fill="#fff" />
  </Tile>
);

const Numbers = () => (
  <Tile id="num" from="#93f076" to="#5fce43">
    <path d="M13 45h8v14h-8zM25 33h8v26h-8zM37.500 10h8v49h-8zM50 23h8v36h-8z" fill="#eef5ee" />
  </Tile>
);

const AppStore = () => (
  <Tile id="store" from="#55b5f2" to="#2a5fd8">
    <g stroke="#f4f7fc" strokeWidth="6" strokeLinecap="round">
      <path d="M38 16L25 40M32 16l22 37M14 43h27M53 43h4M18 51l-1 2" />
    </g>
  </Tile>
);

const Freeform = () => (
  <Tile id="free" from="#fff" to="#fff">
    <circle cx="28" cy="42" r="20" fill="#ef7a5a" />
    <path d="M10 34a20 20 0 0 1 18-12l4 10z" fill="#f0a045" />
    <rect x="23" y="9" width="39" height="38" rx="3" fill="#5ec4ec" opacity="0.900" />
    <path d="M13 45q6-20 12-20 5 1 3 9-1 8 3 7 3-2 6-10 3-5 6-1-2 10 1 11 5 1 9-8 4-2 10-2" stroke="#1d3b5c" strokeWidth="3.400" strokeLinecap="round" />
  </Tile>
);

const Settings = () => (
  <Tile id="set" from="#d3dee6" to="#8f8d89">
    <circle cx="35" cy="35" r="29" fill="#6c6c6c" stroke="#2f2f2f" strokeWidth="3" strokeDasharray="1.600 1.200" />
    <circle cx="35" cy="35" r="24" stroke="#2f2f2f" strokeWidth="4" />
    <circle cx="35" cy="35" r="20.500" stroke="#b8b8b8" strokeWidth="2.500" fill="#555" />
    <circle cx="35" cy="35" r="14" stroke="#333" strokeWidth="4" fill="#777" />
    <path d="M35 35h21M35 35L25 17M35 35L25 53" stroke="#bdbdbd" strokeWidth="2.600" />
    <circle cx="35" cy="35" r="28" stroke="#262626" strokeWidth="1.500" />
  </Tile>
);

const Mirroring = () => (
  <Tile id="mirror" from="#dcdddd" to="#d6d6d6">
    <rect x="21" y="5" width="28" height="60" rx="5" fill="#1f6f8f" stroke="#111" strokeWidth="2" />
    <path d="M22 8q0-2 3-2h14q-4 10-8 26t-9 24z" fill="#f2a097" />
    <path d="M39 6h6q3 0 3 3v14q-8 4-13 12 0-16 4-29z" fill="#77828f" />
    <path d="M22 50q6-18 26-26v38q0 2-3 2H25q-3 0-3-3z" fill="#1d5f83" />
    <rect x="30" y="7" width="10" height="3" rx="1.500" fill="#000" />
  </Tile>
);

const Acrobat = () => (
  <Tile id="acro" from="#a52518" to="#a02216">
    <path d="M34 15c5 0 4 9 0 19-4 11-12 21-17 21-5-2 4-10 17-13 9-3 21-3 22 1 1 4-8 2-14-3-6-5-11-15-11-20 0-3 1-5 3-5z" stroke="#fff" strokeWidth="3.200" />
  </Tile>
);

const WhatsApp = () => (
  <Tile id="wa" from="#87f383" to="#53bf49">
    <g transform="translate(3 3)"><FaWhatsapp size={64} color="#f5f8f5" /></g>
  </Tile>
);

const Tor = () => (
  <Tile id="tor" from="#2a1440" to="#1b0d30">
    <circle cx="35" cy="35" r="30" fill="#6c2bd0" />
    <path d="M35 5a30 30 0 0 0 0 60z" fill="#9a45e4" />
    <g stroke="#d9c2f4" strokeWidth="3.600">
      <path d="M35 12a23 23 0 0 1 0 46M35 20a15 15 0 0 1 0 30M35 29a6 6 0 0 1 0 12" />
    </g>
  </Tile>
);

const Mail = () => (
  <Tile id="mail" from="#3b6fe9" to="#5cc2fa">
    <rect x="11" y="19" width="48" height="32" rx="3" fill="#f0f1f3" />
    <path d="M12 50l17-17M58 50L41 33M12 20l19 20q4 4 8 0l19-20" stroke="#9b9ea5" strokeWidth="1.600" />
  </Tile>
);

const Perplexity = () => (
  <Tile id="perp" from="#000" to="#050505">
    <path d="M12 27h46v18H12z" fill="#1f7684" />
    <path d="M17 11l18 16-18 8zM53 11L35 27l18 8zM35 27L17 45v16l18-14 18 14V45z" fill="#237583" />
    <path d="M35 7v57M17 10l18 17 18-17v17H17zM12 27h46v18H53M12 27v18h5M35 27L17 44v17l18-16 18 16V44z" stroke="#4fc0cb" strokeWidth="1.500" />
  </Tile>
);

const Trash = () => (
  <svg className="w-[62px] h-[80px] -mt-1" viewBox="0 0 62 80" fill="none">
    <path d="M1 12h60l-7 62q-1 5-8 5H16q-7 0-8-5z" fill="#e6e6e8" />
    <path d="M6 16h50l-5 50H11z" fill="#dcdcdf" />
    <path d="M3 12l5-7 6 3 5-8 8 5 6 2 4-7 7 8 7-3 4 10-10 5H10z" fill="#f4f4f4" />
    <path d="M8 10l5-4 3 6zM22 8l6-2 2 8zM46 9l6 1-3 6zM14 14l6-2 1 5zM40 15l5-2 1 5z" fill="#6d6d70" />
    <path d="M19 9l9 3-6 5z" fill="#4fb6d4" />
    <path d="M34 7l8 2-2 8-6-2z" fill="#39405e" />
    <path d="M30 12l4 5h-6z" fill="#c9682e" />
    <path d="M1 12q30 12 60 0" stroke="#fbfbfb" strokeWidth="1.500" />
    <path d="M8 70q23 8 46 0l-2 6q-2 3-7 3H17q-5 0-7-3z" fill="#f6f6f7" />
  </svg>
);

type DockItem = { C: () => React.ReactElement; on?: boolean; badge?: string };

const apps: DockItem[] = [
  { C: Finder, on: true }, { C: ChatGpt, on: true }, { C: Chrome, on: true }, { C: Launchpad },
  { C: Safari, on: true }, { C: Maps }, { C: Messages, on: true }, { C: Photos }, { C: FaceTime },
  { C: Contacts }, { C: Notes, on: true }, { C: Reminders }, { C: AppleTv }, { C: News },
  { C: Keynote }, { C: Pages }, { C: Podcasts }, { C: Numbers }, { C: AppStore },
  { C: Freeform }, { C: Settings }, { C: Mirroring },
];

const recent: DockItem[] = [
  { C: Acrobat, on: true }, { C: WhatsApp, on: true, badge: "2" }, { C: Tor, on: true },
  { C: Mail, on: true, badge: "2,261" }, { C: Perplexity, on: true },
];

function DockSlot({ C, on, badge }: DockItem) {
  return (
    <div className="relative w-[90px] flex flex-col items-center">
      <C />
      {on && <div className="mt-[10px] size-2 rounded-full bg-[#4a4a4a]" />}
      {badge && (
        <div className={"absolute right-px -top-[9px] h-[34px] rounded-full bg-[#eb5545] text-white leading-[34px] text-center shadow-[0_2px_4px_rgba(0,0,0,0.3)] z-10 " + (badge.length > 1 ? "w-[52px] text-[18px] tracking-[-0.05em]" : "w-[34px] text-[19px]")}>
          {badge}
        </div>
      )}
    </div>
  );
}

function Dock() {
  return (
    <div className="w-[2612px] h-[110px] mx-auto rounded-[32px] border-2 border-[#f0f0f0] bg-[#c8c8c8] outline-2 outline-black shadow-[0_0_70px_rgba(0,0,0,0.25)] flex pt-[14px] pl-[3px]">
      {apps.map((a, i) => <DockSlot key={i} {...a} />)}
      <div className="w-10 flex justify-center"><div className="w-0.5 h-20 bg-[#979797] -mt-0.5" /></div>
      {recent.map((a, i) => <DockSlot key={i} {...a} />)}
      <div className="w-10 flex justify-center"><div className="w-0.5 h-20 bg-[#979797] -mt-0.5" /></div>
      <div className="w-[90px] flex justify-center"><Trash /></div>
    </div>
  );
}

/* ---------- wallpaper ---------- */

function rand(seed: number) {
  const x = Math.sin(seed * 127.1) * 43758.5453;
  return x - Math.floor(x);
}

const leafColors = ["#263a20", "#1a2c20", "#34482a", "#14231b", "#46562f", "#0b130e", "#1f2c1c", "#101b16"];
const trunkColors = ["#1d120c", "#0a0606", "#2a1a10", "#120c09", "#050303"];
const nightColors = ["#10161a", "#07090b", "#151b1e", "#0b0f10"];

function Wallpaper() {
  return (
    <svg className="absolute inset-0 w-full h-full" viewBox="0 0 2992 124" preserveAspectRatio="none">
      <defs>
        <filter id="soft"><feGaussianBlur stdDeviation="3" /></filter>
        <linearGradient id="shade" x1="0" y1="0" x2="0" y2="1">
          <stop offset="0" stopColor="#000" stopOpacity="0.850" />
          <stop offset="0.350" stopColor="#000" stopOpacity="0.150" />
          <stop offset="1" stopColor="#000" stopOpacity="0" />
        </linearGradient>
      </defs>
      <rect width="2992" height="124" fill="#0d1411" />
      <g filter="url(#soft)">
        {Array.from({ length: 1300 }, (_, i) => {
          const x = rand(i + 1) * 2992;
          const y = rand(i + 2000) * 134;
          const set = x > 2280 ? nightColors : x > 1240 && x < 1930 ? trunkColors : leafColors;
          const tall = set !== leafColors;
          return (
            <ellipse key={i} cx={x} cy={y} rx={tall ? 8 : 4 + rand(i + 7) * 9} ry={tall ? 34 : 3 + rand(i + 9) * 5}
              fill={set[Math.floor(rand(i + 4000) * set.length)]} opacity={0.7}
              transform={tall ? undefined : `rotate(${-60 + rand(i + 11) * 60} ${x} ${y})`} />
          );
        })}
        <path d="M2608 124l6-14h70l-10 14z" fill="#8a5c38" />
        <path d="M2800 0h50l-20 124h-44z" fill="#1f150f" />
      </g>
      <rect width="2992" height="124" fill="url(#shade)" />
    </svg>
  );
}

export default function App() {
  return (
    <div className="w-[2992px] h-[1934px] overflow-hidden bg-black flex flex-col font-[Inter,sans-serif]">
      <MenuBar />
      <div className="relative mt-0.5 h-[1746px] shrink-0 rounded-[22px] border-2 border-[#bcbcb4] overflow-hidden flex flex-col bg-[#444]">
        <TabStrip />
        <div className="h-[160px] bg-white rounded-t-[16px]">
          <Toolbar />
          <BookmarksBar />
        </div>
        <div className="h-0.5 bg-black" />
        <VillaPage />
      </div>
      <div className="relative flex-1">
        <Wallpaper />
        <div className="relative pt-0.5"><Dock /></div>
      </div>
    </div>
  );
}
